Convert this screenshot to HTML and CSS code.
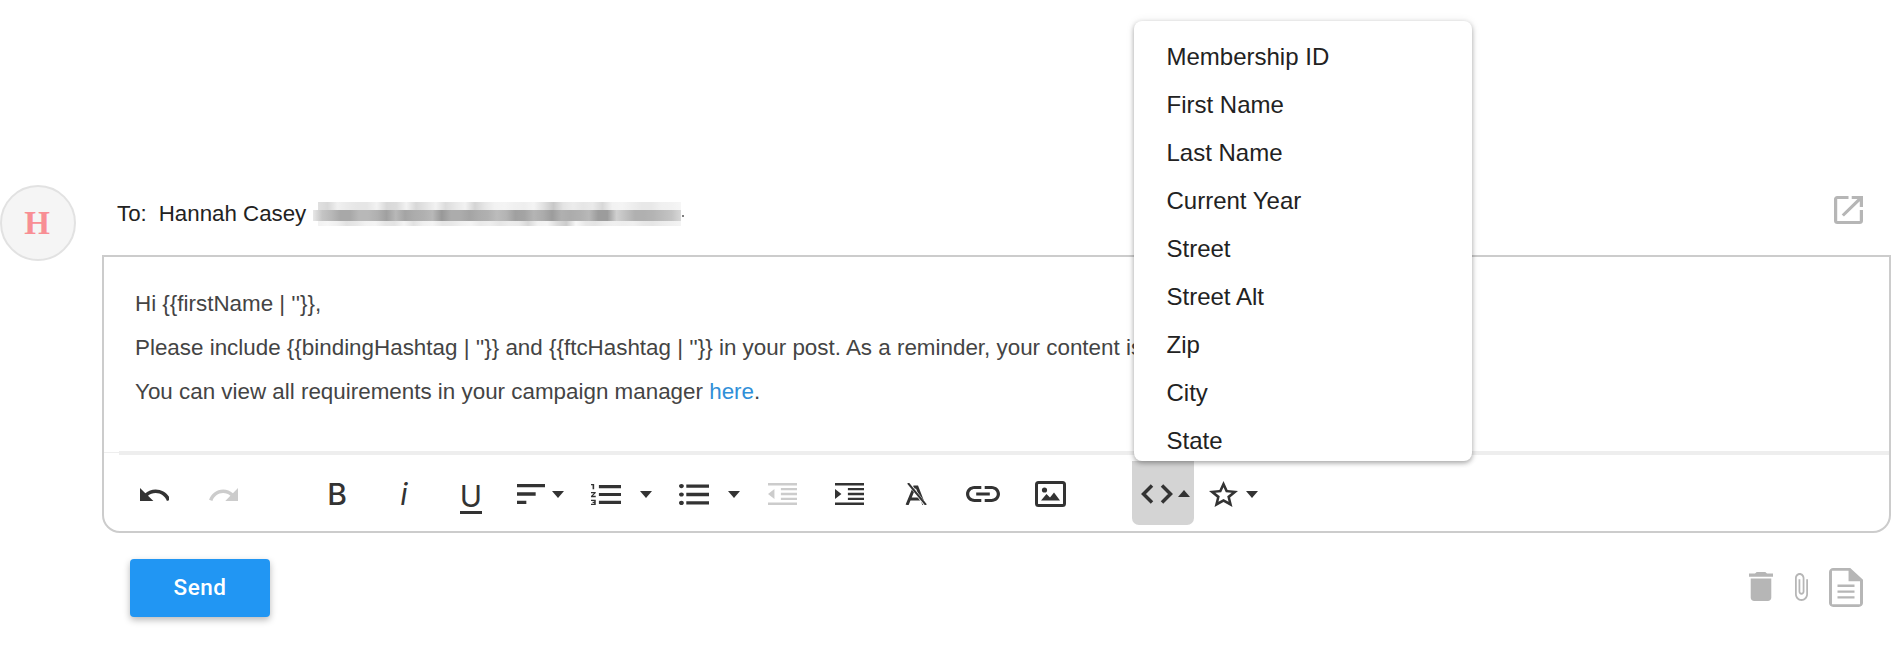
FILE: index.html
```html
<!DOCTYPE html>
<html lang="en">
<head>
<meta charset="utf-8">
<title>Compose</title>
<link rel="stylesheet" href="styles.css">
</head>
<body>
<main class="composer">
  <div class="avatar"><span class="avatar-letter">H</span></div>
  <div class="content">
    <div class="to-row">
      <span class="to-label">To:</span>
      <span class="to-name">Hannah Casey</span>
      <div class="redact">
        <div class="redact-row redact-top"></div>
        <div class="redact-row redact-mid"></div>
        <div class="redact-row redact-bottom"></div>
      </div>
      <svg class="popout" viewBox="3 3 18 18" preserveAspectRatio="none"><path d="M19 19H5V5h7V3H5c-1.11 0-2 .9-2 2v14c0 1.1.89 2 2 2h14c1.1 0 2-.9 2-2v-7h-2v7zM14 3v2h3.59l-9.83 9.83 1.41 1.41L19 6.41V10h2V3h-7z"/></svg>
    </div>
    <section class="editor">
      <div class="editor-body">
        <p>Hi {{firstName | ''}},</p>
        <p>Please include {{bindingHashtag | ''}} and {{ftcHashtag | ''}} in your post. As a reminder, your content is</p>
        <p>You can view all requirements in your campaign manager <a class="link" href="#">here</a>.</p>
      </div>
      <div class="separator"></div>
      <div class="toolbar">
        <div class="group history">
          <div class="tool"><svg class="i-undo" viewBox="2 7 19.5 9" preserveAspectRatio="none"><path d="M12.5 8c-2.65 0-5.05.99-6.9 2.6L2 7v9h9l-3.62-3.62c1.39-1.16 3.16-1.88 5.12-1.88 3.54 0 6.55 2.31 7.6 5.5l2.37-.78C21.08 11.03 17.15 8 12.5 8z"/></svg></div>
          <div class="tool off"><svg class="i-undo" viewBox="1.5 7 20.5 9" preserveAspectRatio="none"><path d="M18.4 10.6C16.55 8.99 14.15 8 11.5 8c-4.65 0-8.58 3.03-9.96 7.22L3.9 16c1.05-3.19 4.05-5.5 7.6-5.5 1.95 0 3.73.72 5.12 1.88L13 16h9V7l-3.6 3.6z"/></svg></div>
        </div>
        <div class="group format">
          <div class="tool glyph glyph-b">B</div>
          <div class="tool glyph glyph-i">i</div>
          <div class="tool glyph glyph-u"><span class="u-letter">U</span></div>
        </div>
        <div class="group lists">
          <div class="dd dd-tight">
            <div class="tool"><svg class="i-sort" viewBox="3 6 18 12" preserveAspectRatio="none"><path d="M3 18h6v-2H3v2zM3 6v2h18V6H3zm0 7h12v-2H3v2z"/></svg></div>
            <span class="caret"></span>
          </div>
          <div class="dd">
            <div class="tool"><svg class="i-list" viewBox="2 4 19 16" preserveAspectRatio="none"><path d="M2 17h2v.5H3v1h1v.5H2v1h3v-4H2v1zm1-9h1V4H2v1h1v3zm-1 3h1.8L2 13.1v.9h3v-1H3.2L5 10.9V10H2v1zm5-6.200v2.400h14v-2.400H7zm0 14.400h14v-2.400H7v2.400zm0-6h14v-2.400H7v2.400z"/></svg></div>
            <span class="caret"></span>
          </div>
          <div class="dd">
            <div class="tool"><svg class="i-list" viewBox="2.5 4.5 18.5 15" preserveAspectRatio="none"><path d="M4 10.5c-.83 0-1.5.67-1.5 1.5s.67 1.5 1.5 1.5 1.5-.67 1.5-1.5-.67-1.5-1.5-1.5zm0-6c-.83 0-1.5.67-1.5 1.5S3.17 7.5 4 7.5 5.5 6.83 5.5 6 4.83 4.5 4 4.5zm0 12c-.83 0-1.5.68-1.5 1.5s.68 1.5 1.5 1.5 1.5-.68 1.5-1.5-.67-1.5-1.5-1.5zM7 19.200h14v-2.400H7v2.400zm0-6h14v-2.400H7v2.400zm0-8.400v2.400h14V4.800H7z"/></svg></div>
            <span class="caret"></span>
          </div>
        </div>
        <div class="group blocks">
          <div class="tool off"><svg class="i-indent" viewBox="3 3 18 18" preserveAspectRatio="none"><path d="M11 17h10v-2H11v2zm-8-5l4 4V8l-4 4zm0 9h18v-2H3v2zM3 3v2h18V3H3zm8 6h10V7H11v2zm0 4h10v-2H11v2z"/></svg></div>
          <div class="tool"><svg class="i-indent" viewBox="3 3 18 18" preserveAspectRatio="none"><path d="M3 21h18v-2H3v2zM3 8v8l4-4-4-4zm8 9h10v-2H11v2zM3 3v2h18V3H3zm8 6h10V7H11v2zm0 4h10v-2H11v2z"/></svg></div>
          <div class="tool"><svg class="i-clear" viewBox="0 0 22 22"><path class="stroke" d="M2 22 9.500 4 12 4 19 22M5 16h12"/><path class="stroke halo" d="M3 -1 21 23"/><path class="stroke thin" d="M3 0 21 22"/></svg></div>
          <div class="tool"><svg class="i-link" viewBox="2 7 20 10" preserveAspectRatio="none"><path d="M3.9 12c0-1.71 1.39-3.1 3.1-3.1h4V7H7c-2.76 0-5 2.24-5 5s2.24 5 5 5h4v-1.9H7c-1.71 0-3.1-1.39-3.1-3.1zM8 13h8v-2H8v2zm9-6h-4v1.9h4c1.71 0 3.1 1.39 3.1 3.1s-1.39 3.1-3.1 3.1h-4V17h4c2.76 0 5-2.24 5-5s-2.24-5-5-5z"/></svg></div>
          <div class="tool"><svg class="i-image" viewBox="0 0 31 26"><rect class="stroke" x="1.500" y="1.500" width="28" height="23" rx="2"/><circle cx="9.500" cy="9" r="2.600"/><path d="M6 19.500l5.500-6.500 3.500 3.500 4-5 6 8z"/></svg></div>
        </div>
        <div class="group insert">
          <div class="code-btn">
            <svg class="i-code" viewBox="0 0 32 20"><path class="stroke code-stroke" d="M11 1.500 2.500 10 11 18.500M21 1.500 29.500 10 21 18.500"/></svg>
            <span class="caret caret-up"></span>
          </div>
          <div class="dd dd-star">
            <div class="tool tool-star"><svg class="i-star" viewBox="2 2 20 19" preserveAspectRatio="none"><path d="M22 9.240l-7.190-.62L12 2 9.190 8.630 2 9.240l5.460 4.730L5.820 21 12 17.270 18.180 21l-1.630-7.030L22 9.240zM12 15.100l-3.500 2.100.93-3.970-3.080-2.670 4.060-.35L12 6.500l1.590 3.710 4.060.35-3.080 2.670.93 3.970L12 15.100z"/></svg></div>
            <span class="caret"></span>
          </div>
        </div>
      </div>
    </section>
    <div class="actions">
      <button class="send" type="button">Send</button>
      <div class="action-icons">
        <svg class="i-trash" viewBox="5 3 14 18" preserveAspectRatio="none"><path d="M6 19c0 1.1.9 2 2 2h8c1.1 0 2-.9 2-2V7H6v12zM19 4h-3.5l-1-1h-5l-1 1H5v2h14V4z"/></svg>
        <svg class="i-clip" viewBox="7 1 11 22" preserveAspectRatio="none"><path d="M16.5 6v11.5c0 2.21-1.79 4-4 4s-4-1.79-4-4V5c0-1.38 1.12-2.5 2.5-2.5s2.5 1.12 2.5 2.5v10.5c0 .55-.45 1-1 1s-1-.45-1-1V6H10v9.5c0 1.38 1.12 2.5 2.5 2.5s2.5-1.12 2.5-2.5V5c0-2.21-1.79-4-4-4S7 2.79 7 5v12.5c0 3.04 2.46 5.5 5.5 5.5s5.5-2.46 5.5-5.5V6h-1.5z"/></svg>
        <svg class="i-doc" viewBox="4 2 16 20" preserveAspectRatio="none"><path fill-rule="evenodd" d="M14 2H6c-1.1 0-2 .9-2 2v16c0 1.1.89 2 1.99 2H18c1.1 0 2-.9 2-2V8l-6-6zm4.600 18.600H5.400V3.400H13.200V8.800h5.400z"/><path d="M8 10.500h8v1.200H8zM8 13.500h8v1.200H8zM8 16.500h8v1.200H8z"/></svg>
      </div>
    </div>
  </div>
</main>
<ul class="menu">
  <li class="menu-item">Membership ID</li>
  <li class="menu-item">First Name</li>
  <li class="menu-item">Last Name</li>
  <li class="menu-item">Current Year</li>
  <li class="menu-item">Street</li>
  <li class="menu-item">Street Alt</li>
  <li class="menu-item">Zip</li>
  <li class="menu-item">City</li>
  <li class="menu-item">State</li>
</ul>
</body>
</html>
```
FILE: styles.css
```css
* { box-sizing: border-box; }
html, body { margin: 0; padding: 0; height: 650px; overflow: hidden; background: #fff; }
body { font-family: "Liberation Sans", Arial, sans-serif; position: relative; }

.composer { display: flex; padding-top: 185px; }
.avatar {
  flex: none; width: 76px; height: 76px; margin-right: 26px; border-radius: 50%;
  background: #f5f5f5; border: 2px solid #e2e2e2; padding-right: 2px;
  display: flex; align-items: center; justify-content: center;
}
.avatar-letter { font-family: "Liberation Serif", serif; font-weight: 700; font-size: 33px; line-height: 1; color: #f88e94; }
.content { flex: 1; min-width: 0; }

.to-row { height: 70px; padding: 0 0 13px 15px; display: flex; align-items: center; font-size: 22.3px; color: #222; position: relative; }
.to-label { margin-right: 12px; }
.to-name { margin-right: 7px; }
.redact { width: 368px; display: flex; flex-direction: column; }
.redact-row { filter: blur(.4px); }
.redact-top { height: 8px; margin: 0 0 0 5px; background: linear-gradient(90deg,#e0e0e0,#d8d8d8,#f0f0f0,#eaeaea,#e6e6e6,#e6e6e6,#f2f2f2,#d8d8d8,#dcdcdc,#f2f2f2,#d8d8d8,#e4e4e4,#f2f2f2,#dcdcdc,#e8e8e8,#f2f2f2,#d4d4d4,#e6e6e6,#f2f2f2,#f4f4f4,#f0f0f0,#eeeeee,#f4f4f4,#e0e0e0,#c8c8c8,#e4e4e4,#ececec,#e6e6e6,#eaeaea,#d8d8d8,#f2f2f2,#f4f4f4,#eeeeee,#e8e8e8,#e8e8e8,#f0f0f0,#f2f2f2,#f6f6f6); }
.redact-mid { height: 11px; position: relative; background: linear-gradient(90deg,#e8e8e8,#c4c4c4,#b8b8b8,#a8a8a8,#a8a8a8,#b8b8b8,#b8b8b8,#b0b0b0,#a0a0a0,#b8b8b8,#a4a4a4,#acacac,#b0b0b0,#b8b8b8,#989898,#acacac,#acacac,#a4a4a4,#acacac,#b0b0b0,#bcbcbc,#b4b4b4,#a0a0a0,#a4a4a4,#b4b4b4,#acacac,#9c9c9c,#b0b0b0,#acacac,#b0b0b0,#b8b8b8,#9c9c9c,#9c9c9c,#d0d0d0,#c0c0c0,#b0b0b0,#b0b0b0,#b4b4b4,#bcbcbc,#c4c4c4,#d8d8d8); }
.redact-mid::after { content: ""; position: absolute; right: -3px; top: 5px; width: 2px; height: 2px; border-radius: 50%; background: #555; }
.redact-bottom { height: 5px; margin: 0 0 0 5px; background: linear-gradient(90deg,#f2f2f2,#f6f6f6,#f0f0f0,#e2e2e2,#e8e8e8,#f2f2f2,#f4f4f4,#e6e6e6,#e4e4e4,#f4f4f4,#e2e2e2,#f0f0f0,#f4f4f4,#e6e6e6,#e8e8e8,#f0f0f0,#f4f4f4,#eaeaea,#eeeeee,#e6e6e6,#ececec,#eaeaea,#d8d8d8,#f2f2f2,#f4f4f4,#dcdcdc,#cccccc,#f8f8f8,#e8e8e8,#e4e4e4,#ececec,#f0f0f0,#eeeeee,#f0f0f0,#e8e8e8,#e6e6e6,#ececec,#f0f0f0,#f4f4f4); }

.popout { width: 29px; height: 28px; fill: #b6b6b6; margin-left: auto; margin-right: 28px; align-self: flex-start; margin-top: 11px; }

.editor { border: 2px solid #ccc; border-radius: 0 0 18px 18px; height: 278px; display: flex; flex-direction: column; }
.editor-body { flex: 1; padding: 25px 0 0 31px; font-size: 22.4px; line-height: 44px; color: #444; white-space: nowrap; overflow: hidden; }
.editor-body p { margin: 0; }
.link { color: #2f8fd8; text-decoration: none; }
.separator {
  height: 4px; flex: none;
  background: linear-gradient(#eee, #eee) 15px 0 / 100% 4px no-repeat, linear-gradient(#eee, #eee) 0 1px / 100% 1px no-repeat;
}
.toolbar { flex: none; height: 76px; padding: 6px 0 6px 32px; display: flex; align-items: center; color: #333; }
.group { display: flex; align-items: center; }
.history { gap: 33px; }
.format { margin-left: 78px; gap: 31px; }
.lists { margin-left: 24px; gap: 24px; }
.blocks { margin-left: 24px; gap: 31px; }
.insert { margin-left: 64px; gap: 11px; }
.tool { width: 36px; height: 36px; margin-top: 2px; display: flex; align-items: center; justify-content: center; flex: none; color: #333; }
.tool svg { fill: #333; display: block; flex: none; }
.tool.off svg { fill: #ccc; }
.stroke { fill: none; stroke: #333; stroke-width: 3; }
.code-stroke { stroke-width: 3.5; }
.glyph { font-family: Inter, "Liberation Sans", sans-serif; font-size: 30px; line-height: 36px; }
.glyph-b { font-weight: 500; }
.glyph-i { font-style: italic; }
.u-letter { display: block; line-height: 30px; border-bottom: 3px solid #333; margin-top: 6px; }
.i-undo { width: 29px; height: 13px; }
.i-sort { width: 28px; height: 20px; }
.i-list { width: 30px; height: 21px; }
.i-indent { width: 29px; height: 22px; }
.i-clear { width: 22px; height: 22px; overflow: hidden; }
.i-clear .halo { stroke: #fff; stroke-width: 3; }
.i-clear .thin { stroke-width: 2; }
.i-link { width: 34px; height: 16px; }
.i-image { width: 31px; height: 26px; }
.dd { display: flex; align-items: center; gap: 16px; }
.dd-tight { gap: 3px; }
.dd-star { gap: 5px; }
.tool-star { width: 36px; }
.i-star { width: 29px; height: 26px; }
.caret { display: block; flex: none; margin-top: 2px; width: 0; height: 0; border-left: 6px solid transparent; border-right: 6px solid transparent; border-top: 7px solid #333; }
.caret-up { border-top: 0; border-bottom: 7px solid #333; margin-left: 5px; margin-top: 0; }
.code-btn { width: 62px; height: 64px; border-radius: 0 0 7px 7px; background: #d4d4d4; padding-left: 9px; display: flex; align-items: center; }
.i-code { width: 32px; height: 20px; flex: none; margin-top: 2px; }

.actions { display: flex; align-items: flex-start; justify-content: space-between; padding: 26px 28px 0 28px; }
.send {
  width: 140px; height: 58px; border: 0; border-radius: 4px; background: #2196f3; color: #fff;
  font-family: Roboto, "Liberation Sans", sans-serif; font-size: 22.5px; font-weight: 500; letter-spacing: .5px;
  box-shadow: 0 3px 7px rgba(0,0,0,.28); padding: 0 0 2px;
}
.action-icons { display: flex; align-items: flex-start; padding-top: 9px; }
.action-icons svg { display: block; fill: #b6b6b6; flex: none; }
.i-trash { width: 24px; height: 29px; margin-top: 4px; margin-right: 22px; }
.i-clip { width: 13px; height: 28px; margin-top: 5px; margin-right: 21px; }
.i-doc { width: 34px; height: 39px; }

.menu {
  position: absolute; left: 1134px; top: 21px; width: 338px; height: 440px; margin: 0; padding: 12px 0 0; list-style: none;
  background: #fff; border-radius: 8px; overflow: hidden;
  box-shadow: 0 2px 5px rgba(0,0,0,.32), 0 0 10px rgba(0,0,0,.08);
}
.menu-item { height: 48px; line-height: 48px; padding-left: 32.5px; font-size: 24px; color: #222; white-space: nowrap; }
```
